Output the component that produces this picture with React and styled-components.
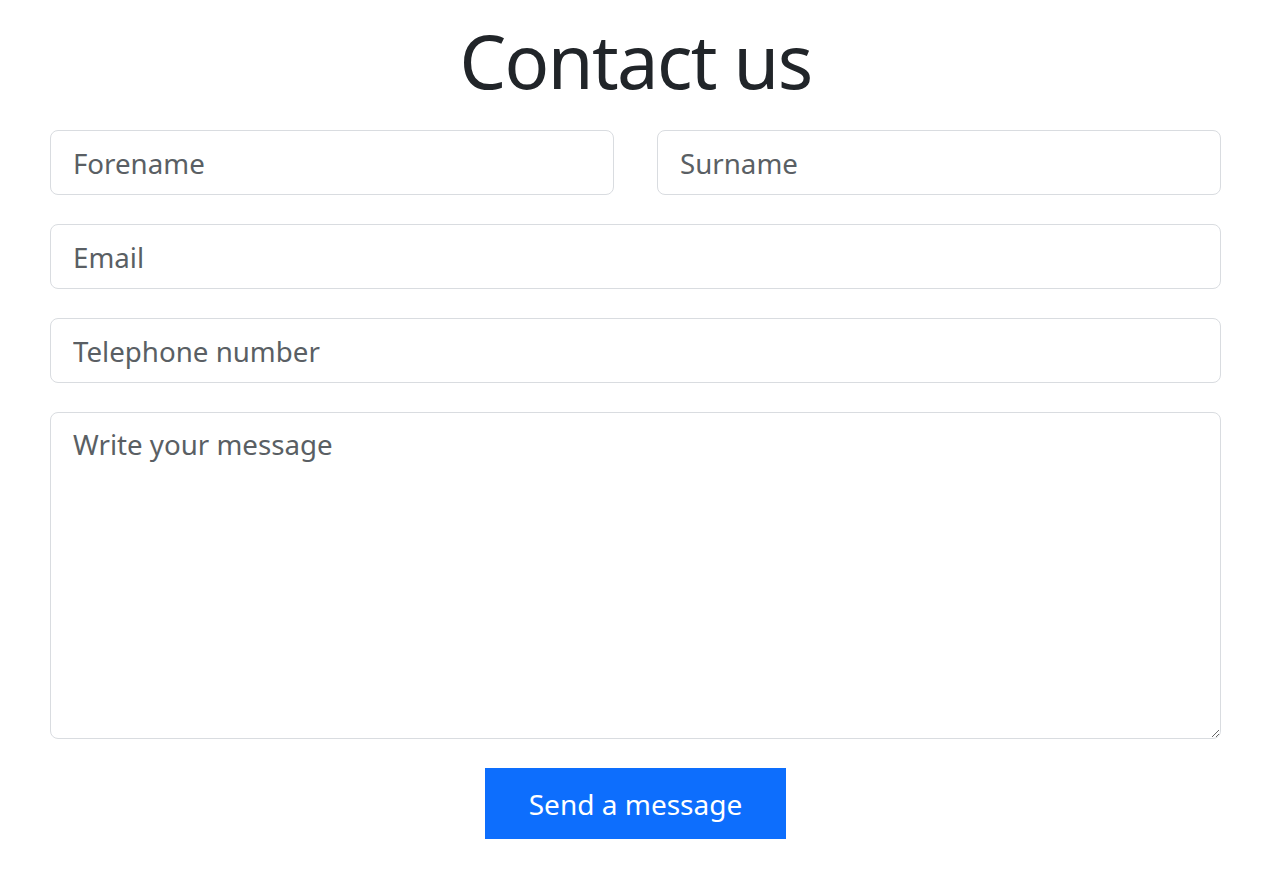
import styled, { createGlobalStyle } from "styled-components";

const GlobalStyle = createGlobalStyle`
  html, body {
    margin: 0;
    padding: 0;
    background: #ffffff;
  }
  body {
    font-family: "Noto Sans", "Open Sans", sans-serif;
    color: #212529;
  }
`;

const Page = styled.main`
  width: 1171px;
  margin-left: 50px;
  padding-top: 18px;
`;

const Title = styled.h1`
  margin: 0 0 26px;
  text-align: center;
  font-size: 74px;
  font-weight: 400;
  line-height: 86px;
  letter-spacing: -1.6px;
  color: #212529;
`;

const Form = styled.form`
  display: flex;
  flex-direction: column;
  gap: 29px;
`;

const Row = styled.div`
  display: grid;
  grid-template-columns: 1fr 1fr;
  column-gap: 43px;
`;

const fieldBase = `
  box-sizing: border-box;
  width: 100%;
  border: 1.5px solid #d9dce0;
  border-radius: 8px;
  background: #fff;
  font-family: "Noto Sans", "Open Sans", sans-serif;
  font-size: 27.7px;
  color: #212529;
  padding: 0 22px;
  outline: none;
  &::placeholder {
    color: #5a5f64;
    opacity: 1;
  }
`;

const Input = styled.input`
  ${fieldBase}
  height: 65px;
`;

const TextArea = styled.textarea`
  ${fieldBase}
  display: block;
  height: 327px;
  padding-top: 11px;
  line-height: 1.5;
  resize: vertical;
`;

const Actions = styled.div`
  display: flex;
  justify-content: center;
`;

const SendButton = styled.button`
  width: 301px;
  height: 71px;
  border: none;
  border-radius: 0;
  background: #0d6efd;
  color: #fff;
  font-family: "Noto Sans", "Open Sans", sans-serif;
  font-size: 28px;
  cursor: pointer;
`;

export default function App() {
  return (
    <>
      <GlobalStyle />
      <Page>
        <Title>Contact us</Title>
        <Form onSubmit={(e) => e.preventDefault()}>
          <Row>
            <Input type="text" placeholder="Forename" />
            <Input type="text" placeholder="Surname" />
          </Row>
          <Input type="email" placeholder="Email" />
          <Input type="tel" placeholder="Telephone number" />
          <TextArea placeholder="Write your message" />
          <Actions>
            <SendButton type="submit">Send a message</SendButton>
          </Actions>
        </Form>
      </Page>
    </>
  );
}
